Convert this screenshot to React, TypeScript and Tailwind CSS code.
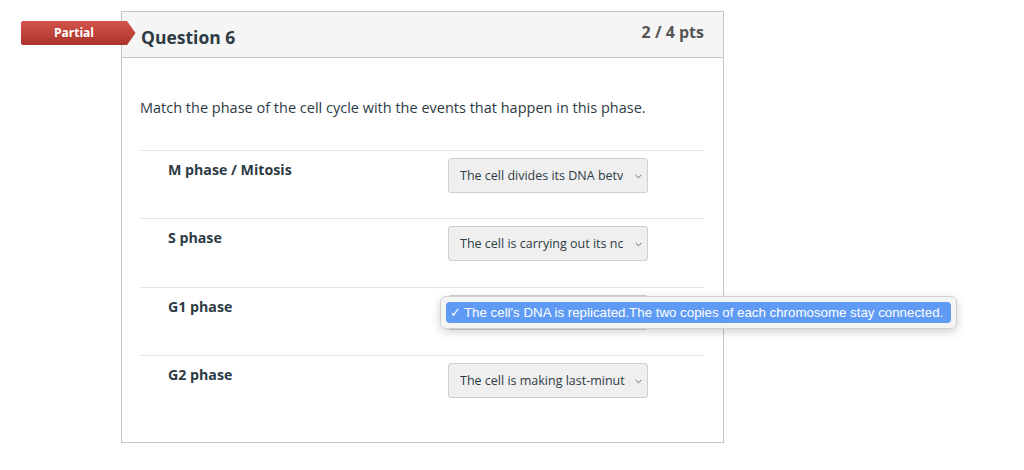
import React from "react";

const rows = [
  { label: "M phase / Mitosis", value: "The cell divides its DNA betv" },
  { label: "S phase", value: "The cell is carrying out its nc" },
  { label: "G1 phase", value: "" },
  { label: "G2 phase", value: "The cell is making last-minut" },
];

function Chevron() {
  return (
    <svg width="7" height="5" viewBox="0 0 7 5" className="shrink-0">
      <path d="M0.7 1 L3.5 3.8 L6.3 1" fill="none" stroke="#666" strokeWidth="1" />
    </svg>
  );
}

function SelectBox({ value }: { value: string }) {
  return (
    <div className="flex h-[35px] w-[200px] items-center justify-between rounded-[3px] border border-[#cfcfcf] bg-[#efefef] pl-[11px] pr-[5px] pt-[2px] text-[12.5px] text-[#2d3b45]">
      <span className="overflow-hidden whitespace-nowrap">{value}</span>
      <Chevron />
    </div>
  );
}

export default function App() {
  const heights = ["h-[68px]", "h-[69px]", "h-[68px]", "h-[87px]"];
  return (
    <div
      className="relative h-[470px] w-[1024px] overflow-hidden bg-white text-[#2d3b45]"
      style={{ fontFamily: '"Open Sans", "Noto Sans", sans-serif' }}
    >
      <div className="ml-[121px] mt-[11px] w-[603px] border border-[#c4c4c4] bg-white">
        <div className="flex h-[46px] justify-between border-b border-[#c4c4c4] bg-[#f5f5f5] pl-[19px] pr-[19px]">
          <div className="pt-[13px] text-[17.5px] font-bold leading-[24px] text-[#2d3b45]">Question 6</div>
          <div className="pt-[8px] text-[16px] font-bold leading-[24px] text-[#555]">2 / 4 pts</div>
        </div>
        <div className="pl-[18px] pr-[19px] pt-[40px]">
          <p className="text-[14.5px] leading-[20px] text-[#2d3b45]">
            Match the phase of the cell cycle with the events that happen in this phase.
          </p>
          <div className="mt-[32px]">
            {rows.map((r, i) => (
              <div key={r.label} className={`flex border-t border-[#e3e3e3] pl-[28px] ${heights[i]}`}>
                <div className="w-[280px] pt-[9px] text-[14.2px] font-bold leading-[20px] text-[#2d3b45]">{r.label}</div>
                <div className="pt-[7px]">
                  <SelectBox value={r.value} />
                </div>
              </div>
            ))}
          </div>
        </div>
      </div>

      {/* Partial badge */}
      <div className="absolute left-[21px] top-[21px] h-[24px] w-[115px]">
        <svg width="115" height="24" viewBox="0 0 115 24" className="absolute inset-0">
          <defs>
            <linearGradient id="bg" x1="0" y1="0" x2="0" y2="1">
              <stop offset="0" stopColor="#d4534a" />
              <stop offset="1" stopColor="#a9332b" />
            </linearGradient>
          </defs>
          <path d="M2 0 H106 L114.5 12 L106 24 H2 Q0 24 0 22 V2 Q0 0 2 0 Z" fill="url(#bg)" />
        </svg>
        <div className="relative flex h-[24px] w-[106px] items-center justify-center text-[12px] font-bold text-white">
          Partial
        </div>
      </div>

      {/* Dropdown popup */}
      <div className="absolute left-[440px] top-[296px] h-[33px] w-[517px] rounded-[6px] border border-[#d0d0d0] bg-[#f3f3f3]/95 p-[5px] shadow-[0_3px_10px_rgba(0,0,0,0.18)]">
        <div
          className="flex h-[21px] items-center rounded-[4px] bg-[#5f9bf5] pl-[4px] pt-[1px] text-[13.3px] text-white"
          style={{ fontFamily: '"Liberation Sans", Arial, sans-serif' }}
        >
          <span className="w-[14px]">✓</span>
          <span>The cell's DNA is replicated.The two copies of each chromosome stay connected.</span>
        </div>
      </div>
    </div>
  );
}
